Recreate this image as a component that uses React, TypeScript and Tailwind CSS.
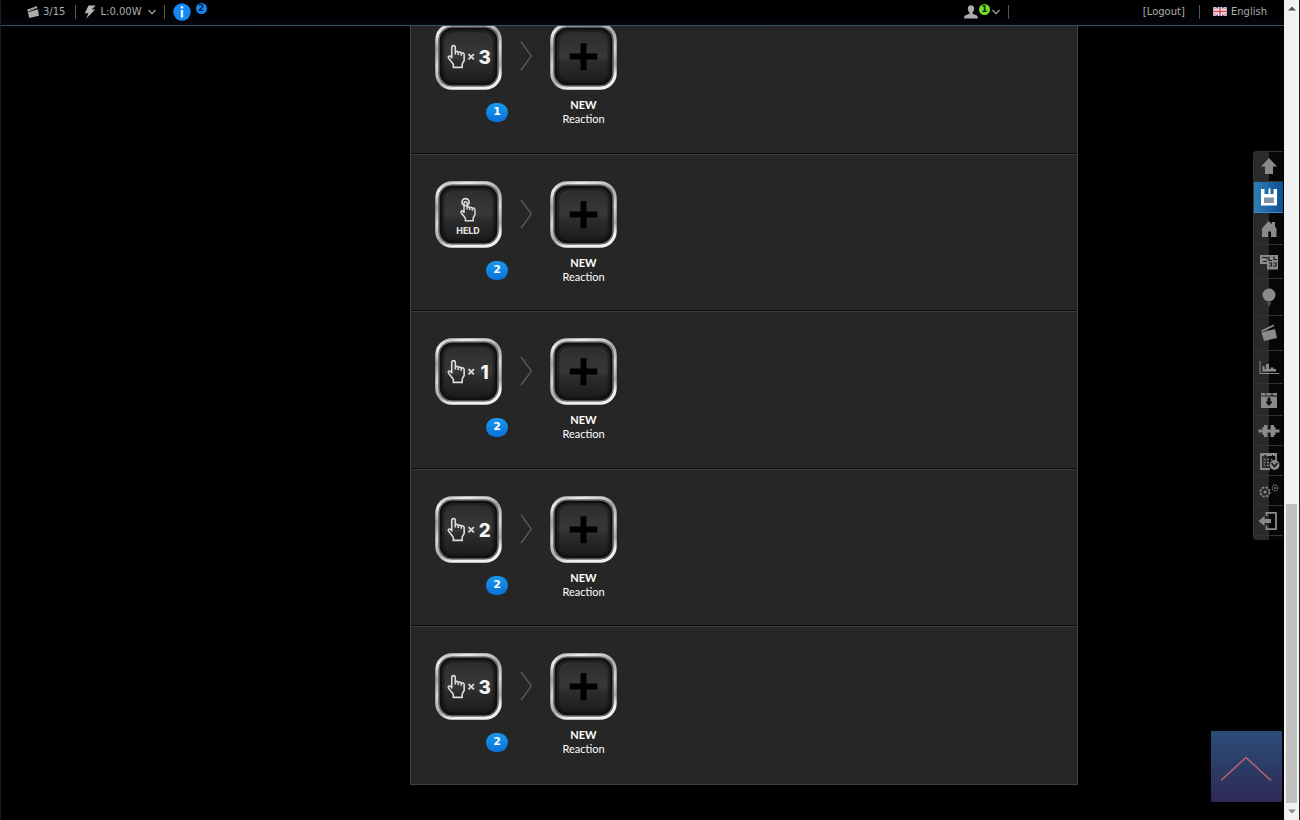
import React from 'react';

interface Reaction {
  id: number;
  press: string;
  channel: number;
}

const reactions: Reaction[] = [
  { id: 1, press: '3', channel: 1 },
  { id: 2, press: 'HELD', channel: 2 },
  { id: 3, press: '1', channel: 2 },
  { id: 4, press: '2', channel: 2 },
  { id: 5, press: '3', channel: 2 },
];

const HAND =
  'M17 36V25q0-2 1.8-2t1.8 2v7M20.6 29.500q1.500-1.500 3 0v3M23.600 30q1.500-1.200 3 .3v3M26.600 30.500q3-.8 3 2v5.500l-2 3.500v3.500h-9v-3l-5-6.500q-.5-2 1.500-2l1.900 1.500';

const ClapperIcon = ({ className }: { className: string }) => (
  <svg viewBox="0 0 16 16" className={className} fill="currentColor" aria-hidden="true">
    <path d="M0 5 12.500 0l1.300 2.800L1.300 7.800z" />
    <path d="M1.200 8.200 14.500 4.200 16 13 3 16z" />
    <path d="M4.500 3.200l1.500 2.200M8.500 1.600l1.500 2.200" stroke="#111" strokeWidth="0.800" />
  </svg>
);

const CaretDown = () => (
  <svg viewBox="0 0 8 6" className="h-[6px] w-2" fill="none" stroke="#999" strokeWidth="1.3" aria-hidden="true">
    <path d="M0.500 1 4 4.700 7.500 1" />
  </svg>
);

const Separator = () => <span className="block h-[14px] w-px bg-[#555]" />;

const TopBar = () => (
  <header className="z-10 flex h-[26px] shrink-0 items-center border-b border-[#2b5468] bg-linear-to-b from-black to-[#03060c] pb-[2px] pl-[26px] pr-[17px] text-[10px] text-[#acacac]">
    <button type="button" className="flex items-center gap-1" aria-label="Scenes 3/15">
      <ClapperIcon className="h-3 w-3" />
      <span>3/15</span>
    </button>
    <div className="ml-[10px] flex items-center gap-2">
      <Separator />
      <button type="button" className="flex items-center gap-1">
        <svg viewBox="0 0 12 14" className="h-[14px] w-3" fill="#b5b5b5" aria-hidden="true">
          <path d="M4.500 0.500h7L7.800 4.500h3.400L2 13.800l2.500-5.500H0.800z" />
        </svg>
        <span>L:0.00W</span>
        <span className="ml-[2px]"><CaretDown /></span>
      </button>
      <Separator />
      <button type="button" className="flex items-start gap-[5px]" aria-label="Information">
        <svg viewBox="0 0 18 18" className="h-[18px] w-[18px]" aria-hidden="true">
          <circle cx="9" cy="9" r="8.700" fill="#1389f5" />
          <path d="M9 3.200v2.300M9 7v7.500" stroke="#e4f2ff" strokeWidth="2.400" />
        </svg>
        <span className="flex h-[11px] w-[11px] items-center justify-center rounded-full bg-[#1389f5] text-[9px] font-bold leading-none text-[#06203a]">2</span>
      </button>
    </div>
    <div className="ml-auto flex items-center">
      <button type="button" className="flex items-center" aria-label="Users">
        <svg viewBox="0 0 14 14" className="h-[14px] w-[14px]" fill="#aaa" aria-hidden="true">
          <path d="M7 .3c2 0 3.200 1.300 3.200 3.300 0 1.600-.7 3-1.600 3.800v1.300c1 .7 5.200 1.300 5.200 3.200v1.600H.2v-1.600c0-1.900 4.200-2.500 5.200-3.200V7.400C4.500 6.600 3.800 5.200 3.800 3.600 3.800 1.600 5 .3 7 .3z" />
        </svg>
        <span className="mb-1 ml-px flex h-[11px] w-[11px] items-center justify-center rounded-full bg-[#6fe02c] text-[9px] font-bold leading-none text-[#0c2a00]">1</span>
        <span className="ml-[2px]"><CaretDown /></span>
      </button>
      <span className="ml-2"><Separator /></span>
      <a href="#logout" className="ml-[134px]">[Logout]</a>
      <span className="ml-[14px]"><Separator /></span>
      <a href="#language" className="ml-[13px] flex items-center gap-1">
        <svg viewBox="0 0 14 9" className="h-[9px] w-[14px]" aria-hidden="true">
          <rect width="14" height="9" fill="#4c5fae" />
          <path d="M0 0l14 9M14 0L0 9" stroke="#f2e8ee" strokeWidth="2.200" />
          <path d="M0 0l14 9M14 0L0 9" stroke="#d0435a" strokeWidth="0.700" />
          <path d="M7 0v9M0 4.500h14" stroke="#f7eef0" strokeWidth="3.800" />
          <path d="M7 0v9M0 4.500h14" stroke="#dd4457" strokeWidth="1.600" />
        </svg>
        <span>English</span>
      </a>
    </div>
  </header>
);

const TileFrame = ({ children }: { children: React.ReactNode }) => (
  <svg viewBox="0 0 68 68" className="block h-[67px] w-[67px]" aria-hidden="true">
    <rect x="2" y="2" width="64" height="64" rx="15" fill="#141414" stroke="url(#metal)" strokeWidth="3.400" />
    <rect x="4.300" y="4.300" width="59.400" height="59.400" rx="13" fill="none" stroke="#666" strokeWidth="1.600" />
    <rect x="6" y="6" width="56" height="56" rx="12" fill="url(#face)" stroke="#101010" strokeWidth="2.500" />
    <rect x="8.500" y="8.500" width="51" height="51" rx="10" fill="none" stroke="#161616" strokeWidth="2" opacity="0.600" />
    {children}
  </svg>
);

const PressTile = ({ press }: { press: string }) => (
  <TileFrame>
    {press === 'HELD' ? (
      <>
        <g fill="none" stroke="#dcdcdc" strokeWidth="1.700">
          <circle cx="31" cy="21.500" r="3.600" />
          <path d={HAND} transform="translate(14.500 .8) scale(.88)" />
        </g>
        <text x="33.500" y="53.500" textAnchor="middle" fontSize="9" fontWeight="800" fill="#dedede" className="font-['Inter',sans-serif]">
          HELD
        </text>
      </>
    ) : (
      <>
        <path d={HAND} fill="none" stroke="#dcdcdc" strokeWidth="1.600" />
        <path d="M34 31.500l5.500 5.500M39.500 31.500L34 37" stroke="#dcdcdc" strokeWidth="1.800" />
        <text x="50.500" y="41.500" textAnchor="middle" fontSize="19" fontWeight="800" fill="#f4f4f4" className="font-['Inter',sans-serif]">
          {press}
        </text>
      </>
    )}
  </TileFrame>
);

const ReactionRow = ({ reaction }: { reaction: Reaction }) => (
  <li className="flex items-start border-t border-[#3c3c3c] pl-6 pt-[26px] shadow-[0_-1px_0_#0a0a0a] odd:pb-[28px] even:pb-[27px]">
    <div className="flex flex-col items-end">
      <button type="button" aria-label={`Press ${reaction.press}`}>
        <PressTile press={reaction.press} />
      </button>
      <span className="mr-[-6px] mt-[13px] flex h-[19px] w-[22px] items-center justify-center rounded-full bg-linear-to-b from-[#1a98ee] to-[#0a72d8] text-[11px] font-bold text-white">
        {reaction.channel}
      </span>
    </div>
    <svg viewBox="0 0 12 30" className="ml-[18px] mt-[18px] h-[30px] w-3" fill="none" stroke="#626262" strokeWidth="1.200" aria-hidden="true">
      <path d="M1 .8 11.300 15 1 29.200" />
    </svg>
    <button type="button" className="ml-[18px] flex flex-col items-center gap-2 font-['Lato',sans-serif] text-[11px] leading-[14px] text-white">
      <TileFrame>
        <path d="M34 20.500v27.500M20 34h28" stroke="#000" strokeWidth="6" />
      </TileFrame>
      <span className="flex flex-col">
        <strong className="font-bold">NEW</strong>
        <span>Reaction</span>
      </span>
    </button>
  </li>
);

const menu = [
  {
    label: 'Top',
    size: 'h-[30px]',
    icon: <path d="M10 1 18 9.500h-4V17H6V9.500H2z" />,
  },
  {
    label: 'Save',
    size: 'h-[31px]',
    active: true,
    icon: (
      <>
        <path d="M2 2h3.500v5h4V1.500h2V7h3V2H18v16.500H2z" />
        <path d="M5 10.500h10V16H5z" fill="#7f93a6" />
      </>
    ),
  },
  {
    label: 'Home',
    size: 'h-8',
    icon: <path d="M9.500 2l3.500 3V3h3v4.500l1.500 2v8.500H12v-5.500H9V18H3V9.500z" />,
  },
  {
    label: 'Rooms',
    size: 'h-[34px]',
    icon: (
      <>
        <path d="M1 3h18v14.500H8V12H1z" />
        <path d="M3 5.500h5v2M10 4.500v4h3M15 4.500v3h3M4 9.500h4M10 11h2.500v3H10M14.500 11H17v3h-3" fill="none" stroke="#1b1b1b" strokeWidth="1.200" />
      </>
    ),
  },
  {
    label: 'Lights',
    size: 'h-[37px]',
    icon: (
      <>
        <circle cx="10" cy="8" r="6.500" />
        <path d="M7.500 15h5L10 20z" fill="#4c4c4c" />
      </>
    ),
  },
  {
    label: 'Scenes',
    size: 'h-[35px]',
    icon: (
      <>
        <path d="M2 7.500 14.500 1.500l.8 1.600L3 9z" />
        <path d="M2.500 9.500 16 6l2 9L5 18z" />
      </>
    ),
  },
  {
    label: 'Statistics',
    size: 'h-[33px]',
    icon: (
      <>
        <path d="M3.500 14.500V9h2v3h1.500V7h3v5h1.500v-1.500h3V12H17v2.500z" />
        <path d="M1 4v12.500h19" fill="none" stroke="#8a8a8a" />
      </>
    ),
  },
  {
    label: 'Backup',
    size: 'h-8',
    icon: (
      <>
        <path d="M2 3h4.500v2.500H2zM7.500 3h5v2.500h-5zM13.500 3H18v2.500h-4.500zM2 6.500h16V18H2z" />
        <path d="M9 8h2v4h2l-3 3.500L7 12h2z" fill="#101010" stroke="#101010" />
      </>
    ),
  },
  {
    label: 'Plugins',
    size: 'h-[30px]',
    icon: <path d="M-.5 8.500h4V6H5V4h3.500v4.500h3V4H15v2h1.500v2.500h4v3h-4V14H15v2h-3.500v-4.500h-3V16H5v-2H3.500v-2.500h-4z" />,
  },
  {
    label: 'Schedule',
    size: 'h-[30px]',
    icon: (
      <>
        <path d="M2 3h15v9M2 3v15h9" fill="none" stroke="#8a8a8a" strokeWidth="1.800" />
        <path d="M1 2h4v3H1zM7 2.500h6V5H7zM14 2h4v3h-4z" />
        <path d="M4.500 8.500h2M8 8.500h2M11.500 8.500h2M4.500 11.500h2M8 11.500h2M4.500 14.500h2M8 14.500h2" stroke="#777" strokeWidth="1.300" />
        <circle cx="15.500" cy="14" r="5" />
        <path d="M12.500 12l3 3.500 3-3.500" fill="none" stroke="#111" strokeWidth="1.500" />
      </>
    ),
  },
  {
    label: 'Settings',
    size: 'h-[30px]',
    icon: (
      <>
        <circle cx="6" cy="11" r="4.600" fill="none" stroke="#8a8a8a" strokeWidth="1.800" strokeDasharray="2.400 1.200" />
        <circle cx="6" cy="11" r="1.500" />
        <circle cx="16" cy="7" r="2.800" fill="none" stroke="#6c6c6c" strokeWidth="1.200" strokeDasharray="1.500 .7" />
        <circle cx="16" cy="7" r="1" />
      </>
    ),
  },
  {
    label: 'Exit',
    size: 'h-[30px]',
    icon: (
      <>
        <path d="M-.5 10l6-5v3H12v4H5.500v3z" />
        <path d="M7.500 5V1.800H17v16.400H7.500V15" fill="none" stroke="#8a8a8a" strokeWidth="1.800" />
      </>
    ),
  },
];

const SideMenu = () => (
  <nav className="absolute right-px top-[151px] flex flex-col rounded-l border-l border-t border-[#333] bg-linear-to-r from-[#2a2a2a] from-50% to-[#060606] to-50% pb-1">
    {menu.map((item) => (
      <button
        key={item.label}
        type="button"
        aria-label={item.label}
        className={`flex w-[29px] items-center justify-center border-b ${item.size} ${
          item.active
            ? 'border-[#3b8cc4] bg-linear-to-r from-[#2f7fb8] to-[#0d4f92] text-white'
            : 'border-[#333] text-[#8a8a8a]'
        }`}
      >
        <svg viewBox="0 0 20 20" className="h-5 w-5 overflow-visible" fill="currentColor" aria-hidden="true">
          {item.icon}
        </svg>
      </button>
    ))}
  </nav>
);

const ScrollTrack = () => (
  <div className="flex w-4 shrink-0 flex-col items-center border-r border-[#222] bg-[#f1f1f1] py-[6px]" aria-hidden="true">
    <svg viewBox="0 0 8 5" className="h-[5px] w-2"><path d="M0 4.500 4 .5l4 4z" fill="#505050" /></svg>
    <div className="mb-[6px] mt-auto h-[37%] w-[11px] bg-[#c1c1c1]" />
    <svg viewBox="0 0 8 5" className="h-[5px] w-2"><path d="M0 .5 4 4.500l4-4z" fill="#8a8a8a" /></svg>
  </div>
);

const App = () => {
  return (
    <div className="flex h-screen overflow-hidden bg-black font-['DejaVu_Sans',Verdana,sans-serif]">
      {/* shared gradients for the tiles */}
      <svg className="absolute h-0 w-0" aria-hidden="true">
        <defs>
          <linearGradient id="metal" x1="0" y1="0" x2="0.300" y2="1">
            <stop offset="0" stopColor="#b0b0b0" />
            <stop offset="0.120" stopColor="#ededed" />
            <stop offset="0.350" stopColor="#a2a2a2" />
            <stop offset="0.600" stopColor="#d8d8d8" />
            <stop offset="0.850" stopColor="#a8a8a8" />
            <stop offset="1" stopColor="#f0f0f0" />
          </linearGradient>
          <linearGradient id="face" x1="0" y1="0" x2="0" y2="1">
            <stop offset="0" stopColor="#2c2c2c" />
            <stop offset="0.500" stopColor="#383838" />
            <stop offset="0.600" stopColor="#2c2c2c" />
            <stop offset="1" stopColor="#1b1b1b" />
          </linearGradient>
        </defs>
      </svg>
      <div className="relative flex min-w-0 flex-1 flex-col border-l border-[#1c1c1c]">
        <TopBar />
        <main className="ml-[409px] mr-[206px]">
          <ul className="-mt-[31px] border border-[#414141] bg-[#262626]">
            {reactions.map((reaction) => (
              <ReactionRow key={reaction.id} reaction={reaction} />
            ))}
          </ul>
        </main>
        <SideMenu />
        <button
          type="button"
          aria-label="Back to top"
          className="absolute bottom-[18px] right-[2px] flex h-[71px] w-[71px] items-center justify-center bg-linear-to-b from-[#294d78] to-[#2c2a55]"
        >
          <svg viewBox="0 0 52 26" className="mt-1 h-[26px] w-[52px]" fill="none" stroke="#b5606f" strokeWidth="1.600" aria-hidden="true">
            <path d="M0 24.500 25 1.500l25 23" />
          </svg>
        </button>
      </div>
      <ScrollTrack />
    </div>
  );
};

export default App;
